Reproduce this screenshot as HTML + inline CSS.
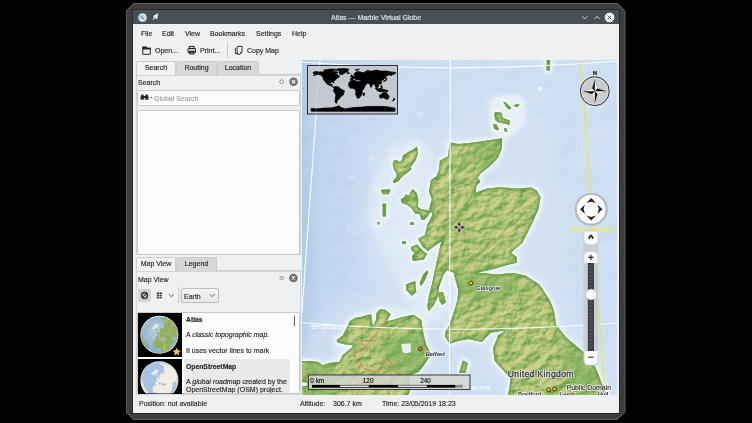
<!DOCTYPE html>
<html><head><meta charset="utf-8">
<style>
*{margin:0;padding:0;box-sizing:border-box}
html,body{width:752px;height:423px;overflow:hidden;background:#000}
body{position:relative;font-family:"Liberation Sans",sans-serif;font-size:7px;color:#1f2326}
.a{position:absolute}
.t{position:absolute;white-space:nowrap;line-height:9px;height:9px;will-change:transform;-webkit-text-stroke:0.15px currentColor}
#frame{left:125.5px;top:3px;width:500px;height:417px;background:#5a5a5a;clip-path:polygon(8px 0,calc(100% - 8px) 0,100% 8px,100% calc(100% - 8px),calc(100% - 8px) 100%,8px 100%,0 calc(100% - 8px),0 8px)}
#frame2{left:126.5px;top:4px;width:498px;height:415px;background:#3d3d3d;clip-path:polygon(7.5px 0,calc(100% - 7.5px) 0,100% 7.5px,100% calc(100% - 7.5px),calc(100% - 7.5px) 100%,7.5px 100%,0 calc(100% - 7.5px),0 7.5px)}
#edge{left:132px;top:9px;width:488px;height:405px;background:#262626}
#title{left:133px;top:10px;width:486px;height:14px;background:#475057}
#win{left:133px;top:24px;width:486px;height:389px;background:#eff0f1}
.tab{position:absolute;height:14px;border:1px solid #cbcdcf;border-bottom:none;border-radius:2px 2px 0 0;background:#d6d8da;text-align:center;line-height:12px;will-change:transform;-webkit-text-stroke:0.15px currentColor}
.tab.on{background:#f2f3f3}
.panel{position:absolute;border:1px solid #d3d5d6;background:#eff0f1}
.box{position:absolute;border:1px solid #c8cacc;background:#fcfcfc;border-radius:2px}
</style></head><body>
<div id="frame" class="a"></div><div id="frame2" class="a"></div><div id="edge" class="a"></div>
<div id="title" class="a"></div>
<div class="t" style="left:331px;top:13px;color:#e3e6e8">Atlas — Marble Virtual Globe</div>
<div id="win" class="a"></div>

<!-- menu -->
<div class="t" style="left:141px;top:29px">File</div>
<div class="t" style="left:162px;top:29px">Edit</div>
<div class="t" style="left:184.5px;top:29px">View</div>
<div class="t" style="left:210px;top:29px">Bookmarks</div>
<div class="t" style="left:256px;top:29px">Settings</div>
<div class="t" style="left:292px;top:29px">Help</div>

<!-- toolbar -->
<div class="t" style="left:154.5px;top:45.5px">Open...</div>
<div class="t" style="left:199.5px;top:45.5px">Print...</div>
<div class="a" style="left:227px;top:42px;width:1px;height:16px;background:#c9cbcd"></div>
<div class="t" style="left:246.5px;top:45.5px">Copy Map</div>

<!-- tabs 1 -->
<div class="a" style="left:136px;top:74px;width:165px;height:1px;background:#cdcfd1"></div>
<div class="tab on" style="left:136px;top:61px;width:40px">Search</div>
<div class="tab" style="left:176px;top:61px;width:41px">Routing</div>
<div class="tab" style="left:217px;top:61px;width:42px">Location</div>

<div class="panel" style="left:136px;top:75px;width:165px;height:180px"></div>
<div class="t" style="left:137.6px;top:78px">Search</div>
<div class="box" style="left:137px;top:90px;width:163px;height:16px"></div>
<div class="t" style="left:154px;top:93.5px;color:#a0a3a6">Global Search</div>
<div class="box" style="left:137px;top:110px;width:163px;height:144.8px"></div>

<!-- tabs 2 -->
<div class="a" style="left:136px;top:270px;width:165px;height:1px;background:#cdcfd1"></div>
<div class="tab on" style="left:136px;top:257px;width:40px">Map View</div>
<div class="tab" style="left:176px;top:257px;width:41px">Legend</div>
<div class="panel" style="left:136px;top:271px;width:165px;height:124px"></div>
<div class="t" style="left:137.6px;top:274.5px">Map View</div>
<div class="box" style="left:137px;top:312px;width:163px;height:82px"></div>
<div class="a" style="left:184px;top:358.7px;width:106px;height:34.5px;background:#e9eaeb"></div>
<div class="a" style="left:138px;top:313px;width:44px;height:44px;background:#000"></div>
<div class="a" style="left:138px;top:359px;width:44px;height:34.5px;background:#000"></div>
<div class="t" style="left:185.6px;top:315px;font-weight:bold;font-size:6.8px">Atlas</div>
<div class="t" style="left:185.6px;top:330.3px">A <i>classic topographic map.</i></div>
<div class="t" style="left:185.6px;top:345.8px">It uses vector lines to mark</div>
<div class="t" style="left:185.6px;top:361.5px;font-weight:bold;font-size:6.8px">OpenStreetMap</div>
<div class="t" style="left:185.6px;top:376.6px">A <i>global roadmap</i> created by the</div>
<div class="a" style="left:137px;top:385px;width:163px;height:8.3px;overflow:hidden"><div class="t" style="left:48.6px;top:0.4px">OpenStreetMap (OSM) project.</div></div>
<div class="a" style="left:293.5px;top:316px;width:1px;height:10px;background:#5a5d60"></div>


<div class="a" style="left:181.3px;top:288.2px;width:37.4px;height:15px;border:1px solid #bcbec0;border-radius:2px;background:linear-gradient(#f4f5f5,#e6e7e8)"></div>
<div class="t" style="left:184.3px;top:291.5px">Earth</div>
<!-- status -->
<div class="t" style="left:139px;top:398.5px">Position: not available</div>
<div class="t" style="left:299.5px;top:398.5px">Altitude:</div>
<div class="t" style="left:332.5px;top:398.5px">306.7 km</div>
<div class="t" style="left:381.5px;top:398.5px">Time: 23/05/2019 18:23</div>

<!-- map -->
<svg class="a" style="left:302px;top:60px" width="315" height="335" viewBox="302 60 315 335">
<defs>
<linearGradient id="seag" x1="0" y1="0" x2="1" y2="0">
<stop offset="0" stop-color="#a9c6e8"/>
<stop offset="0.06" stop-color="#bbd2ed"/>
<stop offset="0.3" stop-color="#c9dcf1"/>
<stop offset="1" stop-color="#cbddf1"/>
</linearGradient>
<filter id="bl6" x="-50%" y="-50%" width="200%" height="200%"><feGaussianBlur stdDeviation="6"/></filter>
<filter id="bl3" x="-50%" y="-50%" width="200%" height="200%"><feGaussianBlur stdDeviation="2.5"/></filter>
<filter id="bl1" x="-50%" y="-50%" width="200%" height="200%"><feGaussianBlur stdDeviation="1.2"/></filter>
<filter id="bl8" x="-50%" y="-50%" width="200%" height="200%"><feGaussianBlur stdDeviation="9"/></filter>
<filter id="tex" x="0" y="0" width="100%" height="100%">
<feTurbulence type="fractalNoise" baseFrequency="0.09 0.13" numOctaves="3" seed="7"/>
<feColorMatrix type="matrix" values="0 0 0 0 0.36  0 0 0 0 0.62  0 0 0 0 0.3  3 0 0 0 -1.4"/>
</filter>
<filter id="tex2" x="0" y="0" width="100%" height="100%">
<feTurbulence type="fractalNoise" baseFrequency="0.12 0.1" numOctaves="3" seed="11"/>
<feColorMatrix type="matrix" values="0 0 0 0 0.9  0 0 0 0 0.88  0 0 0 0 0.6  3 0 0 0 -1.4"/>
</filter>
<filter id="relief" x="0" y="0" width="100%" height="100%" color-interpolation-filters="sRGB">
<feTurbulence type="fractalNoise" baseFrequency="0.09 0.12" numOctaves="4" seed="5" result="n"/>
<feDiffuseLighting in="n" surfaceScale="3" diffuseConstant="1.15" lighting-color="#ffffff" result="l"><feDistantLight azimuth="225" elevation="40"/></feDiffuseLighting>
<feColorMatrix in="l" type="matrix" values="0.46 0 0 0 0.35  0.22 0 0 0 0.6  0.28 0 0 0 0.26  0 0 0 0 1"/>
</filter>
<filter id="searel" x="0" y="0" width="100%" height="100%" color-interpolation-filters="sRGB">
<feTurbulence type="fractalNoise" baseFrequency="0.035 0.05" numOctaves="3" seed="21" result="n"/>
<feDiffuseLighting in="n" surfaceScale="2" diffuseConstant="1" lighting-color="#ffffff" result="l"><feDistantLight azimuth="225" elevation="50"/></feDiffuseLighting>
<feColorMatrix in="l" type="matrix" values="0 0 0 0 1  0 0 0 0 1  0 0 0 0 1  1.6 0 0 0 -1.0"/>
</filter>
<g id="land">
<polygon points="450.6,142.4 458,144 469.6,142.9 486,140.8 502,138.3 502,148 497.8,158 489.5,166.4 481.2,173 477,178 480.5,181.3 476.3,186.3 475.5,193 486,188.7 499,187.3 510,188 519.7,188.5 531,187.6 536.7,190.4 540.5,197 538.6,208.4 533,221.6 525.4,236.8 522.4,242.8 515,249 511,252.7 516.7,257 516.7,262.7 505.3,265.5 491,269.8 477,272.6 496.8,274.5 513.9,273 525.2,275.5 539.4,284.5 546.2,294.9 550,300.5 553.8,310 556.3,325.2 566.4,337.8 581.6,350.4 591.7,360.5 596.8,370.6 601.8,383.3 607,395 609,400 508,400 508.3,395 510.8,378.2 503.3,370.6 494.4,360.5 493.2,347.9 498.2,335.3 505.8,330.2 490.6,332.7 481.8,341.9 468.5,339 458.1,341 449.6,343.8 444.9,336.2 445.8,330.5 449.6,324.9 453.4,313.5 457.5,300 458.4,290 455.5,280 453.8,272.8 447,270 443.4,275 439,287 437.7,297 434,305 428.5,311.5 427.3,306 429,296 432,284 436,265 441.5,241 433,247 428,251 423,247 419,241 418.6,238.6 424.8,234.9 427.3,225 432.3,215 432.7,214 429,210.3 431.8,199 429,191.4 431,180 436.5,176.3 439,169.7 439.9,160.6 448,156.5 449,148.2"/>
<polygon points="296,361 302,361 310.9,361 318,362 322.7,365.4 328.6,363 339.2,362 342.8,354.9 351.6,347.8 353.4,345.2 344.5,344.3 337.4,342.5 336.5,339.9 342.8,335.4 346.3,328.3 349.8,321.3 355.2,317.7 362.2,316.8 367.6,315 371.1,314.2 372,321.3 372.9,326.6 376.4,319.5 376.4,313.3 380,308.9 385.3,309.7 390.6,314.2 387,321.3 393.8,319.8 401.3,317.3 413.7,314.8 421.1,319.8 423.6,334.7 426.1,344.6 431.1,354.5 426.1,362 418.7,371.9 408.7,375.6 411.2,388 406,400 296,400 296,388 301,386.8 307.6,385.5 307,382.5 301,382 296,382"/>
<polygon points="413.1,189.3 416.9,193.5 418.3,200.1 417.9,206.7 420.7,209.1 426.4,210.1 430.6,211.5 428.3,215.3 424.5,220 421.2,219.5 419.7,214.3 415,213.4 411.2,207.7 407.5,204.9 401.8,203 400.8,199.2 403.7,197.8 405.6,194.5 409.3,195.4 411.2,190.7"/>
<polygon points="417,146.5 418.1,153 415.8,160.1 412.2,164.9 410.4,167.8 411.6,169 408.7,171.4 402.8,176.1 399.2,180.2 394.5,183.2 392.7,181.4 396.2,177.3 396.8,174.3 393.9,169.6 392.7,163.7 393.9,160.7 396.8,160.1 399.2,161.9 402.2,160.1 402.8,155.4 408.7,151.8 413.4,149.5"/>
<polygon points="380.6,190 390.2,189 389.1,194.3 382.8,194.3"/>
<polygon points="382.6,203.8 386.2,203.8 386,216.6 382.8,216.6"/>
<polygon points="377.5,222 379.5,222 379.5,224.5 377.5,224.5"/>
<polygon points="411,247 417,244.5 423,251 427,254 424,259.5 413,261 412,256 415,253 411,250"/>
<polygon points="427,270.5 428.2,272 425,280 421,286 419.5,283.5 423,275"/>
<polygon points="406.2,284.5 415.2,281.1 416.3,292.3 411.8,295.7 406.2,290"/>
<polygon points="438.2,292.7 443,291.8 445.8,302.2 442,305 439.2,300.3"/>
<polygon points="462.8,360.5 467.9,363 465.4,373 459,373"/>
<polygon points="410.3,222 414,222.5 413.5,225 410.5,225"/>
<polygon points="402,241.5 405.5,241 406,243.8 402.5,244.2"/>
<polygon points="503,101.5 506,102.5 508,105 511.4,108 509,109.8 506,106.5"/>
<polygon points="513,105.5 517,104 519.7,104.3 517,107.3"/>
<polygon points="494.8,112.3 499,112 502,113.5 502.5,118 506,119 509.7,120.5 509.5,124.7 504,123.5 499,122.5 495.5,120.5 494.5,116"/>
<polygon points="493.2,124 496.5,124.5 499,129 497.5,130.5 494,128.5"/>
<polygon points="504,128 506.5,128.5 507.3,131.5 505,132"/>
<polygon points="547,55 550.5,55 549.5,71.3 546.5,70"/>
</g>
<clipPath id="landclip">
<polygon points="450.6,142.4 458,144 469.6,142.9 486,140.8 502,138.3 502,148 497.8,158 489.5,166.4 481.2,173 477,178 480.5,181.3 476.3,186.3 475.5,193 486,188.7 499,187.3 510,188 519.7,188.5 531,187.6 536.7,190.4 540.5,197 538.6,208.4 533,221.6 525.4,236.8 522.4,242.8 515,249 511,252.7 516.7,257 516.7,262.7 505.3,265.5 491,269.8 477,272.6 496.8,274.5 513.9,273 525.2,275.5 539.4,284.5 546.2,294.9 550,300.5 553.8,310 556.3,325.2 566.4,337.8 581.6,350.4 591.7,360.5 596.8,370.6 601.8,383.3 607,395 609,400 508,400 508.3,395 510.8,378.2 503.3,370.6 494.4,360.5 493.2,347.9 498.2,335.3 505.8,330.2 490.6,332.7 481.8,341.9 468.5,339 458.1,341 449.6,343.8 444.9,336.2 445.8,330.5 449.6,324.9 453.4,313.5 457.5,300 458.4,290 455.5,280 453.8,272.8 447,270 443.4,275 439,287 437.7,297 434,305 428.5,311.5 427.3,306 429,296 432,284 436,265 441.5,241 433,247 428,251 423,247 419,241 418.6,238.6 424.8,234.9 427.3,225 432.3,215 432.7,214 429,210.3 431.8,199 429,191.4 431,180 436.5,176.3 439,169.7 439.9,160.6 448,156.5 449,148.2"/>
<polygon points="296,361 302,361 310.9,361 318,362 322.7,365.4 328.6,363 339.2,362 342.8,354.9 351.6,347.8 353.4,345.2 344.5,344.3 337.4,342.5 336.5,339.9 342.8,335.4 346.3,328.3 349.8,321.3 355.2,317.7 362.2,316.8 367.6,315 371.1,314.2 372,321.3 372.9,326.6 376.4,319.5 376.4,313.3 380,308.9 385.3,309.7 390.6,314.2 387,321.3 393.8,319.8 401.3,317.3 413.7,314.8 421.1,319.8 423.6,334.7 426.1,344.6 431.1,354.5 426.1,362 418.7,371.9 408.7,375.6 411.2,388 406,400 296,400 296,388 301,386.8 307.6,385.5 307,382.5 301,382 296,382"/>
<polygon points="413.1,189.3 416.9,193.5 418.3,200.1 417.9,206.7 420.7,209.1 426.4,210.1 430.6,211.5 428.3,215.3 424.5,220 421.2,219.5 419.7,214.3 415,213.4 411.2,207.7 407.5,204.9 401.8,203 400.8,199.2 403.7,197.8 405.6,194.5 409.3,195.4 411.2,190.7"/>
<polygon points="417,146.5 418.1,153 415.8,160.1 412.2,164.9 410.4,167.8 411.6,169 408.7,171.4 402.8,176.1 399.2,180.2 394.5,183.2 392.7,181.4 396.2,177.3 396.8,174.3 393.9,169.6 392.7,163.7 393.9,160.7 396.8,160.1 399.2,161.9 402.2,160.1 402.8,155.4 408.7,151.8 413.4,149.5"/>
<polygon points="380.6,190 390.2,189 389.1,194.3 382.8,194.3"/>
<polygon points="382.6,203.8 386.2,203.8 386,216.6 382.8,216.6"/>
<polygon points="377.5,222 379.5,222 379.5,224.5 377.5,224.5"/>
<polygon points="411,247 417,244.5 423,251 427,254 424,259.5 413,261 412,256 415,253 411,250"/>
<polygon points="427,270.5 428.2,272 425,280 421,286 419.5,283.5 423,275"/>
<polygon points="406.2,284.5 415.2,281.1 416.3,292.3 411.8,295.7 406.2,290"/>
<polygon points="438.2,292.7 443,291.8 445.8,302.2 442,305 439.2,300.3"/>
<polygon points="462.8,360.5 467.9,363 465.4,373 459,373"/>
<polygon points="410.3,222 414,222.5 413.5,225 410.5,225"/>
<polygon points="402,241.5 405.5,241 406,243.8 402.5,244.2"/>
<polygon points="503,101.5 506,102.5 508,105 511.4,108 509,109.8 506,106.5"/>
<polygon points="513,105.5 517,104 519.7,104.3 517,107.3"/>
<polygon points="494.8,112.3 499,112 502,113.5 502.5,118 506,119 509.7,120.5 509.5,124.7 504,123.5 499,122.5 495.5,120.5 494.5,116"/>
<polygon points="493.2,124 496.5,124.5 499,129 497.5,130.5 494,128.5"/>
<polygon points="504,128 506.5,128.5 507.3,131.5 505,132"/>
<polygon points="547,55 550.5,55 549.5,71.3 546.5,70"/>
</clipPath>
</defs>
<rect x="302" y="60" width="315" height="335" fill="url(#seag)"/>
<rect x="302" y="60" width="315" height="335" filter="url(#searel)" opacity="0.35"/>
<g filter="url(#bl8)" fill="#d8e5f4" opacity="0.55">
<polygon points="370,140 430,130 460,150 450,230 470,300 440,330 380,320 360,240 365,180"/>
<polygon points="330,300 440,300 450,395 302,395 302,340"/>
<polygon points="440,130 520,90 540,130 560,200 560,300 620,380 600,395 490,395 470,330"/>
</g>
<g filter="url(#bl3)" fill="#e2ecf7" opacity="0.8">
<polygon points="370,190 390,148 418,138 432,150 436,180 428,240 445,320 425,325 405,300 382,250 368,220"/>
<polygon points="488,98 520,95 526,125 512,138 492,135"/>
<polygon points="420,240 445,235 455,280 445,320 425,315 410,298"/>
<polygon points="340,330 360,312 395,305 420,312 430,355 410,380 330,370"/>
</g>
<g filter="url(#bl1)" fill="#e9f0f8" opacity="0.85">
<polygon points="492,98 512,94.5 524,97 527,112 519,129 509,137 498,137 491,128 490,110"/>
</g>
<circle cx="540.4" cy="89.1" r="2.3" fill="#f4f7fb" opacity="0.9"/>
<g filter="url(#bl1)" fill="#e6eef8" opacity="0.6">
<ellipse cx="372" cy="157.5" rx="3" ry="2.2"/>
<ellipse cx="351.5" cy="176.5" rx="2.6" ry="2"/>
<ellipse cx="421" cy="115" rx="2.5" ry="2"/>
<ellipse cx="390" cy="97" rx="2" ry="1.6"/>

<ellipse cx="464" cy="117" rx="2" ry="1.6"/>
<ellipse cx="348" cy="227" rx="2" ry="1.5"/>
</g>
<g filter="url(#bl3)" fill="#e9f0f8" stroke="#e9f0f8" stroke-width="6" opacity="0.9">
<use href="#land"/>
</g>
<g filter="url(#bl1)" fill="#f6f9fc" stroke="#f6f9fc" stroke-width="3" opacity="0.95">
<use href="#land"/>
</g>
<g fill="#92be6c"><use href="#land"/></g>
<g clip-path="url(#landclip)">
<rect x="302" y="60" width="315" height="335" filter="url(#relief)"/>
<g filter="url(#bl6)" fill="#76ad58" opacity="0.6">
<polygon points="500,140 500,160 485,170 470,150"/>
<polygon points="455,275 510,278 530,292 480,300 452,295"/>
<polygon points="380,340 425,330 430,370 390,375"/>
<polygon points="560,330 600,370 600,395 570,395"/>
<polygon points="302,365 330,365 340,395 302,395"/>
</g>
<g filter="url(#bl1)" fill="none" stroke="#5a9944" stroke-width="3.5" opacity="0.85"><use href="#land"/></g>
<g filter="url(#bl1)" fill="none" stroke="#5d9a47" stroke-width="1.8" opacity="0.75">
<path d="M478,187 L458,216 L437,248"/>
<path d="M470,150 L455,175 L445,195"/>
<path d="M490,245 L470,262 L455,270"/>
</g>
</g>
<polyline points="385,322 378,332 374.4,335 371.5,340 361.9,341.2 361.5,343.3 365.7,346.6 364,349 354.5,354 353.7,354.9 360.7,363.1 363.2,368.1 367.3,369.4 374,371.9 380.6,370 382.2,365.6 386.4,358.6 390.5,360.7 393.8,368 398.8,376.9 400,380" fill="none" stroke="#e56b45" stroke-width="0.9"/>
<polygon points="401.5,344 410.5,343.5 411,352 405,353.5 402,351" fill="#e8eff7"/>
<g fill="none" stroke="#fff" stroke-width="1.1" opacity="0.95">
<path d="M302,62 Q455,74 617,61.3"/>
<path d="M302,322.8 Q455,335.5 617,323"/>
<path d="M450.4,60 L449.4,395"/>
<path d="M320,60 L296,395"/>
</g>
<path d="M580.5,60 L605,395" stroke="#ede54a" stroke-width="1.1" fill="none"/>
<!-- labels -->
<g font-family="Liberation Sans, sans-serif">
<text x="311" y="329" font-size="6.2" letter-spacing="-0.3" fill="#fff" stroke="#fff" stroke-width="0.2" opacity="0.9">55° 00' 00.0"N</text>
<text x="471.5" y="390" font-size="5.8" fill="#fff" stroke="#fff" stroke-width="0.25" opacity="0.85">00.0"W</text>
<circle cx="420.4" cy="348.9" r="2" fill="#e2683a" stroke="#3a2a20" stroke-width="0.8"/>
<text x="425.7" y="356" font-size="5.8" font-weight="bold" font-style="italic" fill="#1c1c2a" stroke="#fff" stroke-width="1.2" paint-order="stroke" stroke-linejoin="round">Belfast</text>
<circle cx="470.8" cy="283.1" r="2" fill="#e8c020" stroke="#2a2a10" stroke-width="0.8"/>
<text x="476" y="290.3" font-size="5.9" font-weight="bold" letter-spacing="-0.05" fill="#1c1c2a" stroke="#fff" stroke-width="1.2" paint-order="stroke" stroke-linejoin="round">Glasgow</text>
<text x="507.8" y="376.8" font-size="8.6" letter-spacing="0.35" fill="none" stroke="#f4f4f8" stroke-width="1.8" stroke-opacity="0.8" stroke-linejoin="round">United Kingdom</text>
<text x="507.8" y="376.8" font-size="8.6" letter-spacing="0.35" fill="#36333f" stroke="#36333f" stroke-width="0.3">United Kingdom</text>
<circle cx="548.5" cy="389.7" r="1.9" fill="#e8c020" stroke="#2a2a10" stroke-width="0.8"/>
<circle cx="554.7" cy="389" r="1.9" fill="#e8c020" stroke="#2a2a10" stroke-width="0.8"/>
<text x="518" y="395.8" font-size="5.5" font-weight="bold" fill="#1c1c2a" stroke="#fff" stroke-width="1.2" paint-order="stroke">Bradford</text>
<text x="560" y="395.8" font-size="5.5" font-weight="bold" fill="#1c1c2a" stroke="#fff" stroke-width="1.2" paint-order="stroke">Leeds</text>
<text x="598" y="395.8" font-size="5.5" font-weight="bold" fill="#1c1c2a" stroke="#fff" stroke-width="1.2" paint-order="stroke">Hull</text>
<text x="566.6" y="389.7" font-size="6.9" fill="none" stroke="#fff" stroke-width="1.6" stroke-opacity="0.85" stroke-linejoin="round">Public Domain</text>
<text x="566.6" y="389.7" font-size="6.9" fill="#35333f" stroke="#35333f" stroke-width="0.2">Public Domain</text>
<text x="571.3" y="231" font-size="5.8" font-weight="bold" fill="#f3ec3c">Prime Meridian</text>
</g>
<!-- crosshair -->
<g fill="#333" stroke="#ddd" stroke-width="0.4">
<ellipse cx="459.2" cy="224.3" rx="1.5" ry="2"/>
<ellipse cx="459.2" cy="230.3" rx="1.5" ry="2"/>
<ellipse cx="456.1" cy="227.3" rx="2" ry="1.5"/>
<ellipse cx="462.3" cy="227.3" rx="2" ry="1.5"/>
</g>
<!-- overview -->
<rect x="307.5" y="65.5" width="90" height="48.5" fill="#c4c8cf" stroke="#2e3034" stroke-width="1"/>
<g fill="#000" stroke="#000" stroke-width="0.8" stroke-linejoin="round">
<polygon points="312.9,72.9 314.8,71.6 319.5,71.9 323.1,71.9 330.2,71.9 333.3,72.4 334.9,73.9 338.0,74.9 339.7,76.4 337.1,78.2 336.1,78.9 334.7,80.7 333.5,81.7 333.8,83.2 332.8,81.9 331.4,82.2 329.7,82.9 329.7,84.5 331.4,84.2 332.1,84.2 331.9,85.7 333.0,87.0 334.2,87.5 333.8,87.7 332.3,86.5 330.9,85.7 327.8,84.5 326.6,83.5 325.0,81.4 323.3,79.4 323.1,77.2 320.7,74.9 317.1,74.4 315.2,75.1 313.6,75.6 314.3,74.4 312.9,72.9"/>
<polygon points="339.7,74.4 342.5,74.4 345.6,72.4 348.0,71.4 348.5,69.1 344.4,68.6 338.5,68.8 335.4,69.8 339.0,70.6 339.7,74.4"/>
<polygon points="324.2,71.6 332.6,71.4 336.1,69.3 330.2,69.1 323.8,70.1"/>
<polygon points="333.8,73.4 338.0,72.9 336.6,71.4 332.6,71.9"/>
<polygon points="333.8,87.0 335.6,86.5 338.5,87.0 340.9,89.0 344.4,90.8 343.7,93.3 343.2,95.0 341.4,96.1 339.0,99.1 337.3,100.1 336.6,103.4 334.9,102.1 335.4,99.1 335.9,94.5 334.7,93.0 333.5,90.8 334.2,88.7 333.8,87.0"/>
<polygon points="350.4,80.4 350.6,78.4 352.3,78.4 351.6,77.4 353.2,76.6 354.6,75.9 355.1,74.9 353.9,74.4 353.9,73.9 356.3,71.9 358.7,71.6 359.9,71.9 362.2,72.6 363.4,72.4 367.0,71.9 369.4,71.1 371.8,71.1 376.5,70.1 380.1,71.1 386.0,71.1 390.8,71.9 395.5,72.4 395.5,73.4 393.6,74.4 390.8,74.4 391.5,75.6 389.6,74.9 386.0,75.9 386.0,77.4 383.6,78.9 383.1,80.4 381.7,79.4 381.2,81.9 381.7,83.2 378.9,84.5 377.9,87.0 377.2,89.2 376.5,86.0 376.0,87.5 374.6,84.0 373.6,84.0 371.8,85.7 371.0,87.5 369.9,84.5 368.4,83.2 366.5,83.2 364.6,81.9 366.1,83.2 366.8,84.0 365.1,85.5 363.4,86.5 362.2,85.7 361.1,82.4 360.4,81.7 361.3,80.4 359.4,80.2 358.9,79.4 358.0,80.4 357.5,79.4 357.0,79.4 355.6,78.4 356.3,79.9 354.6,78.4 353.5,78.7 352.3,80.2 350.4,80.4"/>
<polygon points="348.7,84.2 348.9,82.4 350.6,81.4 351.3,80.7 355.1,80.2 355.4,80.9 357.5,81.7 360.4,81.7 361.1,83.2 363.2,86.7 364.9,86.5 364.1,88.2 362.2,90.8 362.2,93.3 361.1,95.5 360.4,96.6 358.9,98.1 357.5,98.3 356.3,95.8 355.6,93.8 356.1,91.5 354.9,89.8 354.9,88.5 352.8,88.2 350.9,88.2 349.7,87.5 348.7,85.7"/>
<polygon points="379.8,95.0 381.7,94.0 383.6,92.5 385.1,92.5 385.3,93.5 386.5,92.3 387.4,94.3 389.1,96.1 388.4,98.8 387.7,99.1 386.0,99.1 384.8,98.3 383.6,97.6 380.1,98.1 379.6,96.1"/>
<polygon points="311.2,108.4 317.1,108.9 324.2,108.1 331.4,107.9 337.3,106.6 339.0,105.6 339.7,107.1 345.6,108.9 352.8,107.6 362.2,107.1 367.0,106.6 374.1,106.4 381.2,106.4 388.4,106.9 393.1,107.9 395.0,108.1 395.0,111.2 311.2,111.2"/>
<polygon points="375.3,88.2 377.7,91.0 380.1,91.5 381.2,91.8 386.0,91.5 388.4,91.0 386.0,90.0 383.6,89.5 382.4,89.0 380.8,88.0 378.4,89.0"/>
<polygon points="351.6,76.9 353.0,76.6 352.3,75.4 352.0,74.8 351.3,74.9 351.6,75.9"/>
<polygon points="350.4,76.4 351.3,76.4 351.3,75.6 350.9,75.6"/>
<polygon points="383.6,81.7 384.8,80.9 386.0,80.7 386.5,79.4 387.2,78.4 386.0,78.2 385.8,79.9 384.1,80.9"/>
<polygon points="363.2,93.3 364.6,93.0 364.1,95.8 363.2,95.5"/>
<polygon points="393.6,98.3 395.0,99.1 394.1,100.1 392.4,101.1 393.6,99.8"/>
<polygon points="381.2,85.0 382.4,87.0 382.0,88.0 381.0,87.0"/>
<polygon points="347.1,73.4 349.4,73.4 349.4,72.9 347.5,72.7"/>
<polygon points="355.1,69.8 359.4,69.3 357.5,70.1"/>
<polygon points="365.1,71.9 368.9,70.3 366.5,70.9"/>
</g>
<path d="M319.2,65.5 L315.6,114" stroke="#fff" stroke-width="0.6" opacity="0.35"/>
<!-- compass -->
<g>
<text x="594.8" y="75.3" font-size="6" font-weight="bold" text-anchor="middle" fill="#1a1a1a" stroke="#1a1a1a" stroke-width="0.2" font-family="Liberation Sans, sans-serif">N</text>
<circle cx="594.8" cy="91.2" r="14.4" fill="#cbcccd" stroke="#2e2e2e" stroke-width="1"/>
<circle cx="594.8" cy="91.2" r="13.2" fill="none" stroke="#e8e8e8" stroke-width="0.6"/>
<polygon points="594.8,79.4 597.5,88.5 606.6,91.2 597.5,93.9 594.8,103.0 592.1,93.9 583.0,91.2 592.1,88.5" fill="#111"/>
<polygon points="594.8,79.4 597.5,88.5 594.8,91.2" fill="#fafafa"/>
<polygon points="606.6,91.2 597.5,93.9 594.8,91.2" fill="#fafafa"/>
<polygon points="594.8,103.0 592.1,93.9 594.8,91.2" fill="#fafafa"/>
<polygon points="583.0,91.2 592.1,88.5 594.8,91.2" fill="#fafafa"/>
</g>
<!-- nav pad -->
<g>
<circle cx="591.2" cy="209.3" r="16.6" fill="#aeb2b8" opacity="0.8"/>
<circle cx="591.2" cy="209.3" r="14.3" fill="#fdfdfd"/>
<polygon points="591.2,198.1 596.0,203.1 591.2,201.7 586.4,203.1" fill="#262626"/>
<polygon points="602.4,209.3 597.4,214.1 598.8,209.3 597.4,204.5" fill="#262626"/>
<polygon points="591.2,220.5 586.4,215.5 591.2,216.9 596.0,215.5" fill="#262626"/>
<polygon points="580.0,209.3 585.0,204.5 583.6,209.3 585.0,214.1" fill="#262626"/>
</g>
<!-- zoom slider -->
<g>
<rect x="583.4" y="229.8" width="14.9" height="136" rx="4" fill="#c4c9d0" opacity="0.75"/>
<path d="M584.4,231.4 H597.4 V239.4 Q597.4,244.2 592.6,244.2 H589.2 Q584.4,244.2 584.4,239.4 Z" fill="#fdfdfd"/>
<path d="M588.4,239 V236.6 L590.9,234.2 L593.4,236.6 V239 H591.8 V237.4 H590 V239 Z" fill="#333"/>
<path d="M584.4,263 V256.6 Q584.4,251.8 589.2,251.8 H592.6 Q597.4,251.8 597.4,256.6 V263 Z" fill="#fdfdfd"/>
<path d="M588.3,257.4 H593.5 M590.9,254.8 V260" stroke="#222" stroke-width="1.1"/>
<rect x="587.8" y="263" width="6.2" height="88" fill="#3d4145"/>
<g fill="#53585d">
<rect x="589" y="265.0" width="3.8" height="1.3"/>
<rect x="589" y="268.4" width="3.8" height="1.3"/>
<rect x="589" y="271.8" width="3.8" height="1.3"/>
<rect x="589" y="275.2" width="3.8" height="1.3"/>
<rect x="589" y="278.6" width="3.8" height="1.3"/>
<rect x="589" y="282.0" width="3.8" height="1.3"/>
<rect x="589" y="285.4" width="3.8" height="1.3"/>
<rect x="589" y="288.8" width="3.8" height="1.3"/>
<rect x="589" y="292.2" width="3.8" height="1.3"/>
<rect x="589" y="295.6" width="3.8" height="1.3"/>
<rect x="589" y="299.0" width="3.8" height="1.3"/>
<rect x="589" y="302.4" width="3.8" height="1.3"/>
<rect x="589" y="305.8" width="3.8" height="1.3"/>
<rect x="589" y="309.2" width="3.8" height="1.3"/>
<rect x="589" y="312.6" width="3.8" height="1.3"/>
<rect x="589" y="316.0" width="3.8" height="1.3"/>
<rect x="589" y="319.4" width="3.8" height="1.3"/>
<rect x="589" y="322.8" width="3.8" height="1.3"/>
<rect x="589" y="326.2" width="3.8" height="1.3"/>
<rect x="589" y="329.6" width="3.8" height="1.3"/>
<rect x="589" y="333.0" width="3.8" height="1.3"/>
<rect x="589" y="336.4" width="3.8" height="1.3"/>
<rect x="589" y="339.8" width="3.8" height="1.3"/>
<rect x="589" y="343.2" width="3.8" height="1.3"/>
<rect x="589" y="346.6" width="3.8" height="1.3"/>
</g>
<path d="M584.4,351 H597.4 V359.9 Q597.4,364.7 592.6,364.7 H589.2 Q584.4,364.7 584.4,359.9 Z" fill="#fdfdfd"/>
<path d="M588.3,357.2 H593.5" stroke="#222" stroke-width="1.1"/>
<circle cx="591.1" cy="294.5" r="5.3" fill="#fbfbfb" stroke="#c8c8c8" stroke-width="0.5"/>
</g>
<!-- scale bar -->
<g>
<rect x="308.5" y="375" width="161.5" height="14.5" fill="#d4d6d2" fill-opacity="0.82" stroke="#3a3a3a" stroke-width="1"/>
<g font-family="Liberation Sans, sans-serif" font-size="6.4" fill="#111" stroke="#111" stroke-width="0.15">
<text x="310.3" y="383.2">0 km</text>
<text x="362.8" y="383.2">120</text>
<text x="420.2" y="383.2">240</text>
</g>
<rect x="311.9" y="384.9" width="143.7" height="2.8" fill="#000"/>
<rect x="455.6" y="384.9" width="7.2" height="2.8" fill="#888"/>
<rect x="340.1" y="385.5" width="28.7" height="1.4" fill="#fff"/>
<rect x="398.1" y="385.5" width="28.8" height="1.4" fill="#fff"/>
</g>

</svg>



<svg class="a" style="left:0;top:0" width="752" height="423" viewBox="0 0 752 423">
<!-- titlebar icons -->
<circle cx="142.5" cy="17.6" r="4.3" fill="#d8e4ea"/>
<circle cx="141.5" cy="17.2" r="2.6" fill="#8fd8ef" opacity="0.8"/>
<path d="M140.5,15.8 L144.5,19.4" stroke="#c84a50" stroke-width="1"/>
<path d="M153,19.5 L154.6,17.9 M153.8,16.2 L157.5,14.3 L156.8,18.6 Z M154,16.5 L156.8,18.2" stroke="#f2f2f2" stroke-width="1.1" fill="#f2f2f2"/>
<g fill="none" stroke="#d6d9dc" stroke-width="1">
<polyline points="582.2,16.4 584.7,18.9 587.2,16.4"/>
<polyline points="594.5,18.9 597,16.4 599.5,18.9"/>
</g>
<circle cx="609.6" cy="17.5" r="4.8" fill="#fcfcfc"/>
<path d="M607.7,15.6 L611.5,19.4 M611.5,15.6 L607.7,19.4" stroke="#31363b" stroke-width="0.9"/>
<!-- toolbar icons -->
<path d="M142.8,47.3 H146.2 L147.2,48.3 H150.3 V54.3 H142.8 Z" fill="none" stroke="#232627" stroke-width="1"/>
<path d="M142.3,46.4 H146.4 L147.6,47.8 H150.8 V49.6 H142.3 Z" fill="#232627"/>
<g fill="none" stroke="#232627" stroke-width="1">
<rect x="189.3" y="46.4" width="4.8" height="2"/>
<path d="M188,48.7 H195.5 V52.3 H188 Z"/>
<rect x="189.6" y="51.2" width="4.2" height="2.8"/>
</g>
<path d="M188,52.3 H195.5" stroke="#232627" stroke-width="1.4"/>
<g fill="none" stroke="#232627" stroke-width="0.9">
<path d="M235.4,47.8 V53.6 H238.2"/>
<path d="M237.2,46.4 H242.1 V52 L240,54.2 H237.2 Z"/>
</g>
<path d="M242.1,52.2 L240.2,54.2 V52.2 Z" fill="#232627"/>
<!-- search dock -->
<g fill="none" stroke="#6b6f73" stroke-width="0.8">
<path d="M281.7,79.4 L284,81.7 L281.7,84 L279.4,81.7 Z"/>
<path d="M281.6,276 L283.6,278 L281.6,280 L279.6,278 Z"/>
</g>
<circle cx="293.5" cy="81.7" r="4.3" fill="#6c6f72"/>
<path d="M291.9,80.1 L295.1,83.3 M295.1,80.1 L291.9,83.3" stroke="#fff" stroke-width="1.1"/>
<circle cx="293.4" cy="278" r="4.3" fill="#6c6f72"/>
<path d="M291.8,276.4 L295,279.6 M295,276.4 L291.8,279.6" stroke="#fff" stroke-width="1.1"/>
<!-- binoculars -->
<g fill="#1a1a1a">
<circle cx="142.3" cy="98" r="2"/>
<circle cx="146.8" cy="98" r="2"/>
<rect x="141.2" y="94.6" width="2.4" height="3"/>
<rect x="145.5" y="94.6" width="2.4" height="3"/>
<rect x="143.5" y="96" width="2" height="1.6"/>
</g>
<circle cx="142.4" cy="98.6" r="0.9" fill="#b8561c"/>
<circle cx="146.9" cy="98.6" r="0.9" fill="#b8561c"/>
<path d="M150.3,97 H152.5 L151.4,98.4 Z" fill="#555"/>
<!-- globes -->
<defs>
<radialGradient id="gatl" cx="0.45" cy="0.42" r="0.6"><stop offset="0" stop-color="#b4cfe8"/><stop offset="1" stop-color="#80a8d6"/></radialGradient>
<clipPath id="cg1"><circle cx="159.4" cy="334.8" r="18.3"/></clipPath>
<clipPath id="cg2"><rect x="138" y="359" width="44" height="34.3"/></clipPath>
<clipPath id="cg3"><circle cx="159.4" cy="380.2" r="18.3"/></clipPath>
<filter id="grel" x="0" y="0" width="100%" height="100%" color-interpolation-filters="sRGB">
<feTurbulence type="fractalNoise" baseFrequency="0.3" numOctaves="2" seed="9"/>
<feColorMatrix type="matrix" values="0 0 0 0 0.85  0 0 0 0 0.82  0 0 0 0 0.5  2.4 0 0 0 -1.1"/>
</filter>
</defs>
<circle cx="159.4" cy="334.8" r="19" fill="#f5f5f2"/>
<circle cx="159.4" cy="334.8" r="18.3" fill="url(#gatl)"/>
<g clip-path="url(#cg1)">
<g fill="#8fae62" stroke="#8fae62" stroke-width="0.6">
<polygon points="141.6,334.0 141.9,334.7 142.2,335.4 142.4,336.2 142.6,337.0 142.9,337.8 143.3,338.6 143.6,339.9 144.1,341.2 144.6,342.4 145.2,343.3 145.8,344.2 146.4,345.0 147.1,345.8 147.9,346.5 147.7,347.0 147.6,347.4 147.5,347.7 147.5,348.1 147.6,348.4 147.0,348.0 146.5,347.5 146.4,347.5 146.3,347.4 146.3,347.4 146.4,347.4 146.1,347.2 146.0,347.0 146.4,347.4 146.8,347.9 147.3,348.3 147.9,348.8 147.0,348.0 146.1,347.1 145.6,346.6 145.2,346.1 144.8,345.6 144.4,345.1 144.1,344.5 143.8,344.0 143.5,343.5 143.3,343.0 143.0,342.5 142.8,342.1 142.4,340.9 142.0,339.8 141.7,338.8 141.5,337.8 141.4,336.8 141.4,336.3 141.5,335.9 141.5,334.9 141.6,334.0"/>
<polygon points="155.8,338.8 156.1,337.6 156.4,336.4 157.2,336.5 158.0,336.6 157.5,335.3 158.3,334.9 159.0,334.5 159.6,334.0 160.2,333.5 160.4,332.2 159.6,331.6 159.6,331.0 160.1,330.2 160.4,329.3 160.7,328.5 161.0,328.3 161.3,328.1 161.6,328.0 162.2,328.1 162.7,328.2 163.2,328.4 163.7,328.5 164.0,327.9 164.2,327.6 164.4,327.4 164.5,327.1 164.6,326.8 164.7,326.5 164.7,326.1 164.6,325.7 164.4,325.3 164.6,325.1 164.7,324.8 164.8,324.6 164.6,324.3 164.5,324.0 164.3,323.8 164.1,323.5 163.9,323.3 163.7,323.1 163.9,322.9 164.1,322.7 164.3,322.6 164.5,322.4 164.6,322.1 164.5,321.9 164.4,321.7 164.3,321.5 164.1,321.3 163.9,321.2 163.8,321.0 163.6,320.8 163.4,320.7 163.3,320.4 163.1,320.2 162.9,320.0 162.7,319.8 162.5,319.6 162.2,319.4 161.9,319.2 161.6,319.1 161.3,319.0 160.9,318.8 160.6,318.7 160.2,318.7 160.3,318.1 160.9,317.9 161.7,317.8 162.1,317.9 162.6,318.0 163.0,318.1 163.5,318.3 163.5,317.7 164.0,318.0 164.4,318.4 165.0,318.5 165.6,318.7 166.1,318.9 166.7,319.2 167.2,319.5 167.7,319.4 168.3,319.4 169.1,319.9 169.9,320.4 170.7,321.0 171.4,321.3 172.0,321.7 172.1,322.0 172.1,322.4 172.8,322.8 173.4,323.3 174.0,323.8 174.4,324.1 174.9,324.8 175.4,325.7 175.8,326.5 176.2,327.4 176.6,328.3 177.0,329.2 177.3,330.1 177.5,330.9 177.7,331.8 177.8,332.6 177.7,332.2 177.6,331.7 177.5,331.2 177.3,330.8 177.5,331.6 177.7,332.4 177.5,332.1 177.3,331.8 176.9,331.4 176.5,331.1 176.4,332.0 176.6,333.6 176.7,335.3 176.8,336.4 176.8,337.5 176.6,337.1 176.2,336.7 175.9,336.3 175.4,335.9 174.8,336.0 174.1,336.0 173.5,336.7 172.8,337.5 171.9,337.5 170.8,337.5 171.7,337.7 172.5,337.8 173.3,338.0 173.0,339.4 172.5,340.7 171.8,341.8 171.1,342.9 169.7,342.8 169.3,342.2 168.7,341.5 168.2,340.8 167.7,340.0 166.7,339.4 167.2,337.6 166.3,337.8 165.3,338.0 164.6,337.3 163.9,338.7 163.2,337.6 162.8,337.7 162.0,337.2 161.2,336.6 161.6,337.5 162.1,338.4 161.2,337.6 160.3,336.7 159.1,337.0 158.5,337.9 157.8,338.8 156.8,338.9 155.8,338.8"/>
<polygon points="153.2,342.7 153.5,341.8 153.8,340.8 154.8,340.5 155.8,340.1 156.7,339.3 157.6,339.3 158.4,339.3 159.2,339.2 160.1,339.0 160.9,338.9 161.2,339.8 162.0,340.0 162.8,340.2 163.7,340.3 164.4,340.2 165.2,340.0 166.0,339.7 166.7,339.4 167.3,340.2 167.9,340.8 168.7,341.5 169.5,342.2 170.2,342.7 170.9,343.2 171.7,342.6 172.5,341.9 172.3,343.0 172.0,344.0 171.4,345.1 170.8,346.2 170.1,347.3 170.0,347.9 169.9,348.4 169.7,348.9 169.2,349.6 168.6,350.2 168.0,350.7 166.9,351.4 166.0,351.8 165.0,352.2 164.3,352.5 163.5,352.6 163.2,352.6 162.9,352.5 162.5,352.3 162.1,352.0 161.7,351.5 162.0,351.1 162.2,350.7 162.4,350.1 161.7,349.6 160.9,349.0 160.9,347.9 159.9,347.9 159.0,347.8 158.0,347.7 156.7,347.6 155.5,347.4 154.0,346.4 153.5,345.4 153.0,344.3 153.1,343.5"/>
<polygon points="157.6,334.7 158.2,334.6 158.8,334.5 158.4,332.8 158.3,332.0 157.7,332.1 157.7,333.4"/>
<polygon points="156.7,333.9 157.5,334.0 157.6,333.1 157.2,333.0"/>
<polygon points="155.7,329.6 156.1,329.8 156.6,329.9 157.0,330.0 157.2,329.4 156.7,329.2 156.3,329.0"/>
</g>
<g fill="#e9eeee" stroke="#e9eeee" stroke-width="0.6">
<polygon points="151.7,328.1 151.9,328.4 152.2,328.7 152.5,329.0 152.8,329.3 153.6,329.1 154.3,328.8 155.0,328.5 155.7,328.2 156.2,328.0 156.7,327.8 157.2,327.5 157.6,326.7 158.1,326.0 158.5,325.2 158.4,325.0 158.3,324.9 158.2,324.7 158.2,324.6 158.2,324.4 158.0,324.4 157.9,324.4 157.8,324.3 157.7,324.3 157.6,324.2 157.5,324.1 157.4,324.1 157.3,324.0 156.9,324.0 156.6,324.0 156.2,324.0 155.9,323.9 155.7,324.1 155.6,324.3 155.5,324.6 155.4,324.8 155.4,325.1 154.6,325.6 153.8,326.2 153.1,326.8 152.4,327.4 151.7,328.1"/>
</g>
<rect x="140" y="316" width="39" height="38" filter="url(#grel)" opacity="0.55" clip-path="url(#cg1)"/>
</g>
<path d="M176.7,348.2 L177.7,350.6 L180.2,350.8 L178.3,352.4 L178.9,354.9 L176.7,353.5 L174.5,354.9 L175.1,352.4 L173.2,350.8 L175.7,350.6 Z" fill="#f7c632" stroke="#fff3b0" stroke-width="0.5"/>
<g clip-path="url(#cg2)">
<circle cx="159.4" cy="380.2" r="19" fill="#f5f5f2"/>
<circle cx="159.4" cy="380.2" r="18.3" fill="#a6c3e2"/>
<g clip-path="url(#cg3)" fill="#f2eee3" stroke="#f2eee3" stroke-width="0.6">
<polygon points="141.4,379.4 141.7,380.1 142.0,380.8 142.2,381.6 142.4,382.4 142.7,383.2 143.1,384.0 143.4,385.3 143.9,386.6 144.4,387.8 145.0,388.7 145.6,389.6 146.2,390.4 146.9,391.2 147.7,391.9 147.5,392.4 147.4,392.8 147.3,393.1 147.3,393.5 147.4,393.8 146.8,393.4 146.3,392.9 146.2,392.9 146.1,392.8 146.1,392.8 146.2,392.8 145.9,392.6 145.8,392.4 146.2,392.8 146.6,393.3 147.1,393.7 147.7,394.2 146.8,393.4 145.9,392.5 145.4,392.0 145.0,391.5 144.6,391.0 144.2,390.5 143.9,389.9 143.6,389.4 143.3,388.9 143.1,388.4 142.8,387.9 142.6,387.5 142.2,386.3 141.8,385.2 141.5,384.2 141.3,383.2 141.2,382.2 141.2,381.7 141.3,381.3 141.3,380.3 141.4,379.4"/>
<polygon points="155.6,384.2 155.9,383.0 156.2,381.8 157.0,381.9 157.8,382.0 157.3,380.7 158.1,380.3 158.8,379.9 159.4,379.4 160.0,378.9 160.2,377.6 159.4,377.0 159.4,376.4 159.9,375.6 160.2,374.7 160.5,373.9 160.8,373.7 161.1,373.5 161.4,373.4 162.0,373.5 162.5,373.6 163.0,373.8 163.5,373.9 163.8,373.3 164.0,373.0 164.2,372.8 164.3,372.5 164.4,372.2 164.5,371.9 164.5,371.5 164.4,371.1 164.2,370.7 164.4,370.5 164.5,370.2 164.6,370.0 164.4,369.7 164.3,369.4 164.1,369.2 163.9,368.9 163.7,368.7 163.5,368.5 163.7,368.3 163.9,368.1 164.1,368.0 164.3,367.8 164.4,367.5 164.3,367.3 164.2,367.1 164.1,366.9 163.9,366.7 163.7,366.6 163.6,366.4 163.4,366.2 163.2,366.1 163.1,365.8 162.9,365.6 162.7,365.4 162.5,365.2 162.3,365.0 162.0,364.8 161.7,364.6 161.4,364.5 161.1,364.4 160.7,364.2 160.4,364.1 160.0,364.1 160.1,363.5 160.7,363.3 161.5,363.2 161.9,363.3 162.4,363.4 162.8,363.5 163.3,363.7 163.3,363.1 163.8,363.4 164.2,363.8 164.8,363.9 165.4,364.1 165.9,364.3 166.5,364.6 167.0,364.9 167.5,364.8 168.1,364.8 168.9,365.3 169.7,365.8 170.5,366.4 171.2,366.7 171.8,367.1 171.9,367.4 171.9,367.8 172.6,368.2 173.2,368.7 173.8,369.2 174.2,369.5 174.7,370.2 175.2,371.1 175.6,371.9 176.0,372.8 176.4,373.7 176.8,374.6 177.1,375.5 177.3,376.3 177.5,377.2 177.6,378.0 177.5,377.6 177.4,377.1 177.3,376.6 177.1,376.2 177.3,377.0 177.5,377.8 177.3,377.5 177.1,377.2 176.7,376.8 176.3,376.5 176.2,377.4 176.4,379.0 176.5,380.7 176.6,381.8 176.6,382.9 176.4,382.5 176.0,382.1 175.7,381.7 175.2,381.3 174.6,381.4 173.9,381.4 173.3,382.1 172.6,382.9 171.7,382.9 170.6,382.9 171.5,383.1 172.3,383.2 173.1,383.4 172.8,384.8 172.3,386.1 171.6,387.2 170.9,388.3 169.5,388.2 169.1,387.6 168.5,386.9 168.0,386.2 167.5,385.4 166.5,384.8 167.0,383.0 166.1,383.2 165.1,383.4 164.4,382.7 163.7,384.1 163.0,383.0 162.6,383.1 161.8,382.6 161.0,382.0 161.4,382.9 161.9,383.8 161.0,383.0 160.1,382.1 158.9,382.4 158.3,383.3 157.6,384.2 156.6,384.3 155.6,384.2"/>
<polygon points="153.0,388.1 153.3,387.2 153.6,386.2 154.6,385.9 155.6,385.5 156.5,384.7 157.4,384.7 158.2,384.7 159.0,384.6 159.9,384.4 160.7,384.3 161.0,385.2 161.8,385.4 162.6,385.6 163.5,385.7 164.2,385.6 165.0,385.4 165.8,385.1 166.5,384.8 167.1,385.6 167.7,386.2 168.5,386.9 169.3,387.6 170.0,388.1 170.7,388.6 171.5,388.0 172.3,387.3 172.1,388.4 171.8,389.4 171.2,390.5 170.6,391.6 169.9,392.7 169.8,393.3 169.7,393.8 169.5,394.3 169.0,395.0 168.4,395.6 167.8,396.1 166.7,396.8 165.8,397.2 164.8,397.6 164.1,397.9 163.3,398.0 163.0,398.0 162.7,397.9 162.3,397.7 161.9,397.4 161.5,396.9 161.8,396.5 162.0,396.1 162.2,395.5 161.5,395.0 160.7,394.4 160.7,393.3 159.7,393.3 158.8,393.2 157.8,393.1 156.5,393.0 155.3,392.8 153.8,391.8 153.3,390.8 152.8,389.7 152.9,388.9"/>
<polygon points="157.4,380.1 158.0,380.0 158.6,379.9 158.2,378.2 158.1,377.4 157.5,377.5 157.5,378.8"/>
<polygon points="156.5,379.3 157.3,379.4 157.4,378.5 157.0,378.4"/>
<polygon points="155.5,375.0 155.9,375.2 156.4,375.3 156.8,375.4 157.0,374.8 156.5,374.6 156.1,374.4"/>
<polygon points="151.5,373.5 151.7,373.8 152.0,374.1 152.3,374.4 152.6,374.7 153.4,374.5 154.1,374.2 154.8,373.9 155.5,373.6 156.0,373.4 156.5,373.2 157.0,372.9 157.4,372.1 157.9,371.4 158.3,370.6 158.2,370.4 158.1,370.3 158.0,370.1 158.0,370.0 158.0,369.8 157.8,369.8 157.7,369.8 157.6,369.7 157.5,369.7 157.4,369.6 157.3,369.5 157.2,369.5 157.1,369.4 156.7,369.4 156.4,369.4 156.0,369.4 155.7,369.3 155.5,369.5 155.4,369.7 155.3,370.0 155.2,370.2 155.2,370.5 154.4,371.0 153.6,371.6 152.9,372.2 152.2,372.8 151.5,373.5"/>
</g>
</g>
<!-- map view toolbar -->
<rect x="138.2" y="289" width="12.6" height="12.7" rx="1" fill="#cdd0d2"/>
<circle cx="144.6" cy="295.4" r="2.9" fill="none" stroke="#2a2a2a" stroke-width="1.3"/>
<path d="M142.4,297.6 L146.8,293.2" stroke="#2a2a2a" stroke-width="1.2"/>
<g fill="#3a3d40">
<rect x="156.8" y="292.4" width="2.2" height="1.6"/><rect x="159.6" y="292.4" width="2.2" height="1.6"/>
<rect x="156.8" y="294.6" width="2.2" height="1.6"/><rect x="159.6" y="294.6" width="2.2" height="1.6"/>
<rect x="156.8" y="296.8" width="2.2" height="1.6"/><rect x="159.6" y="296.8" width="2.2" height="1.6"/>
</g>
<polyline points="168.8,294.2 171.3,296.7 173.8,294.2" fill="none" stroke="#3a3d40" stroke-width="0.8"/>
<rect x="178.2" y="287" width="1" height="16" fill="#c9cbcd"/>
<polyline points="209.9,294.2 212.4,296.7 214.9,294.2" fill="none" stroke="#3a3d40" stroke-width="0.8"/>
</svg>

</body></html>
